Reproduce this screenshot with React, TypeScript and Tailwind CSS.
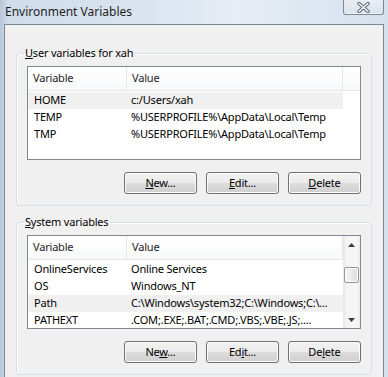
import React from 'react';

type Row = { name: string; value: string };

const userRows: Row[] = [
  { name: 'HOME', value: 'c:/Users/xah' },
  { name: 'TEMP', value: '%USERPROFILE%\\AppData\\Local\\Temp' },
  { name: 'TMP', value: '%USERPROFILE%\\AppData\\Local\\Temp' },
];

// last row sits under the bottom edge, only its top peeks out
const systemRows: Row[] = [
  { name: 'OnlineServices', value: 'Online Services' },
  { name: 'OS', value: 'Windows_NT' },
  { name: 'Path', value: 'C:\\Windows\\system32;C:\\Windows;C:\\...' },
  { name: 'PATHEXT', value: '.COM;.EXE;.BAT;.CMD;.VBS;.VBE;.JS;....' },
  { name: 'PROCESSOR_LEVEL', value: 'x86 Family 6 Model 15 Stepping 11' },
];

// mnemonic letter gets underlined, like &New in the win32 resource
function Label({ text, at }: { text: string; at: number }) {
  return (
    <>
      {text.slice(0, at)}
      <span className="underline underline-offset-[1px]">{text[at]}</span>
      {text.slice(at + 1)}
    </>
  );
}

function Button({ text, at }: { text: string; at: number }) {
  return (
    <div className="w-[73px] h-[22px] flex items-center justify-center rounded-[3px] border border-[#707070] bg-[linear-gradient(to_bottom,#f2f2f2_0%,#ebebeb_50%,#dddddd_50%,#cfcfcf_100%)] shadow-[inset_0_0_0_1px_#fbfbfb] text-black">
      <span>
        <Label text={text} at={at} />
      </span>
    </div>
  );
}

function ScrollBar() {
  return (
    <div className="w-[17px] shrink-0 flex flex-col bg-[linear-gradient(to_right,#e6e6e6,#f4f4f4_20%,#f6f6f6_80%,#ececec)]">
      <div className="h-[17px] flex items-center justify-center">
        <svg width="7" height="4" viewBox="0 0 7 4">
          <polygon points="0,4 3.5,0 7,4" fill="#3d3d3d" />
        </svg>
      </div>
      <div className="flex-1">
        <div className="mt-[14px] mx-auto w-[15px] h-[16px] rounded-[2px] border border-[#959595] bg-[linear-gradient(to_right,#f5f5f5,#e9e9e9_50%,#dcdcdc)] shadow-[inset_0_0_0_1px_#fdfdfd]" />
      </div>
      <div className="h-[17px] flex items-center justify-center">
        <svg width="7" height="4" viewBox="0 0 7 4">
          <polygon points="0,0 3.5,4 7,0" fill="#3d3d3d" />
        </svg>
      </div>
    </div>
  );
}

function ListView({ rows, selected, scroll }: { rows: Row[]; selected: number; scroll?: boolean }) {
  return (
    <div className="flex h-[94px] border border-[#828790] bg-white overflow-hidden">
      <div className="flex-1 flex flex-col min-w-0">
        <div className="flex h-[24px] shrink-0 bg-[linear-gradient(to_bottom,#ffffff,#f8f9fa)] border-b border-[#e5e5e5] text-[#1e1e1e]">
          <div className="w-[99px] pl-[5px] flex items-center border-r border-[#e5e5e5]">Variable</div>
          <div className="w-[216px] pl-[5px] flex items-center border-r border-[#e5e5e5]">Value</div>
          <div className="flex-1" />
        </div>
        <div className="pt-[1px] flex flex-col">
          {rows.map((r, i) => (
            <div
              key={r.name}
              className={`flex w-[315px] h-[17px] shrink-0 items-center text-black whitespace-nowrap ${i === selected ? 'bg-[#f0f0f0]' : ''}`}
            >
              <div className="w-[99px] pl-[6px] overflow-hidden">{r.name}</div>
              <div className="w-[216px] pl-[4px] overflow-hidden">{r.value}</div>
            </div>
          ))}
        </div>
      </div>
      {scroll && <ScrollBar />}
    </div>
  );
}

function Group({
  title,
  at,
  rows,
  selected,
  scroll,
  buttons,
  className,
}: {
  title: string;
  at: number;
  rows: Row[];
  selected: number;
  scroll?: boolean;
  buttons: [string, number][];
  className?: string;
}) {
  return (
    <fieldset className={`w-[356px] ml-[11px] px-[10px] pb-[11px] rounded-[3px] border border-[#d5dfe5] shadow-[inset_1px_1px_0_#ffffff] ${className ?? ''}`}>
      <legend className="ml-[-3px] px-[1px] leading-[16px] text-black">
        <Label text={title} at={at} />
      </legend>
      <div className="mt-[5px]">
        <ListView rows={rows} selected={selected} scroll={scroll} />
      </div>
      <div className="mt-[12px] flex justify-end gap-[9px]">
        {buttons.map(([t, a]) => (
          <Button key={t} text={t} at={a} />
        ))}
      </div>
    </fieldset>
  );
}

export default function App() {
  return (
    <div className="w-[388px] h-[377px] overflow-hidden flex flex-col px-[4px] bg-[linear-gradient(to_right,#b9c7dc,#cfdcea_2%,#dbe5f1_40%,#e6edf5_60%,#d6e1ee)] font-['Noto_Sans',sans-serif]">
      <div className="h-[24px] shrink-0 flex justify-between">
        <div className="pl-[1px] flex items-center text-[12px] text-[#1f1f1f]">Environment Variables</div>
        <div className="w-[41px] h-[15px] flex items-center justify-center rounded-b-[3px] border border-t-0 border-[#7c8894] bg-[linear-gradient(to_bottom,#e9eef4,#d9e2ec)] shadow-[inset_0_-1px_0_#f4f7fa]">
          <svg width="13" height="11" viewBox="0 0 13 11">
            <path d="M2 1.5 L11 9.5 M11 1.5 L2 9.5" stroke="#5b6571" strokeWidth="3.4" strokeLinecap="round" />
            <path d="M2 1.5 L11 9.5 M11 1.5 L2 9.5" stroke="#ffffff" strokeWidth="1.4" strokeLinecap="round" />
          </svg>
        </div>
      </div>
      <div className="flex-1 border border-b-0 border-[#7a8896] bg-[#f0f0f0] text-[11px] tracking-[-0.2px]">
        <Group
          className="mt-[20px]"
          title="User variables for xah"
          at={0}
          rows={userRows}
          selected={0}
          buttons={[['New...', 0], ['Edit...', 0], ['Delete', 0]]}
        />
        <Group
          className="mt-[8px]"
          title="System variables"
          at={0}
          rows={systemRows}
          selected={2}
          scroll
          buttons={[['New...', 2], ['Edit...', 2], ['Delete', 2]]}
        />
      </div>
    </div>
  );
}
